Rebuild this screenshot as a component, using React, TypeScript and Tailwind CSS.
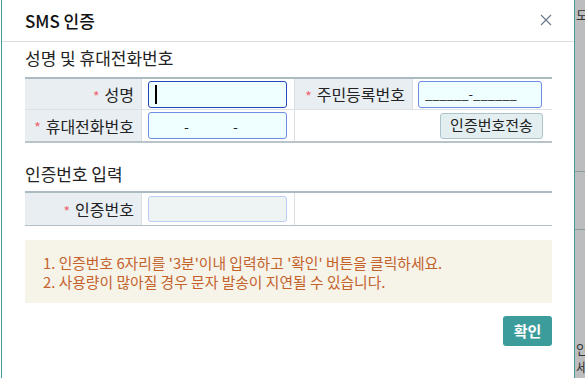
import React from "react";

const font = { fontFamily: '"Noto Sans CJK KR", "Noto Sans", sans-serif' };

function Star() {
  return <span className="text-[#f0646e] mr-[5px] text-[14px] relative top-[2px]">*</span>;
}

function Label({ children }: { children: React.ReactNode }) {
  return (
    <div className="bg-[#e8eef2] flex items-center justify-end pr-[7px] text-[16px] text-[#222] border-r border-[#dcdfe2]">
      <Star />
      {children}
    </div>
  );
}

export default function App() {
  return (
    <div className="w-[585px] h-[378px] bg-white flex overflow-hidden" style={font}>
      <div className="w-[574px] h-full flex pl-[1px]">
        <div className="flex-1 h-full border-l border-[#3f9c9c] flex flex-col">
          {/* header */}
          <div className="h-[42px] border-b border-[#dcdcdc] flex items-center justify-between pl-[23px] pr-[22px] shrink-0">
            <span className="text-[17px] text-[#111] font-medium">SMS 인증</span>
            <svg width="12" height="12" viewBox="0 0 12 12" className="mt-[-2px]">
              <path d="M1 1 L11 11 M11 1 L1 11" stroke="#6c7a8e" strokeWidth="1.2" />
            </svg>
          </div>
          <div className="pl-[23px] pr-[22px] flex flex-col">
            <div className="h-[35px] flex items-center pb-[4px] text-[17px] text-[#222]">성명 및 휴대전화번호</div>
            {/* table 1 */}
            <div className="border-t-2 border-b-2 border-t-[#abbbc2] border-b-[#b9c4ca]">
              <div className="grid grid-cols-[117px_153px_118px_1fr] h-[31px] border-b border-[#dde1e4]">
                <Label>성명</Label>
                <div className="flex items-center pl-[6px] border-r border-[#dcdfe2]">
                  <div className="w-[139px] h-[27px] rounded-[3px] border border-[#2846b8] bg-[#effefe] flex items-center pl-[6px]">
                    <span className="w-[2px] h-[19px] bg-black" />
                  </div>
                </div>
                <Label>주민등록번호</Label>
                <div className="flex items-center pl-[5px]">
                  <div className="w-[124px] h-[27px] rounded-[3px] border border-[#6f8de6] bg-[#effefe] flex items-center pl-[6px] text-[13px] text-[#222]">
                    ______-______
                  </div>
                </div>
              </div>
              <div className="grid grid-cols-[117px_153px_118px_1fr] h-[31px]">
                <Label>휴대전화번호</Label>
                <div className="flex items-center pl-[6px] border-r border-[#dcdfe2]">
                  <div className="w-[139px] h-[27px] rounded-[3px] border border-[#6f8de6] bg-[#effefe] flex items-center text-[14px] text-[#222] relative">
                    <span className="absolute left-[35px] top-[3px]">-</span>
                    <span className="absolute left-[84px] top-[3px]">-</span>
                  </div>
                </div>
                <div className="col-span-2 flex items-center justify-end pr-[9px]">
                  <button className="w-[103px] h-[26px] rounded-[3px] border border-[#aec4cc] bg-[#e3eef0] text-[15px] text-[#222]">
                    인증번호전송
                  </button>
                </div>
              </div>
            </div>
            <div className="h-[48px] flex items-center pt-[14px] text-[17px] text-[#222]">인증번호 입력</div>
            {/* table 2 */}
            <div className="border-t-2 border-b border-t-[#abbbc2] border-b-[#b3bfc5]">
              <div className="grid grid-cols-[117px_153px_1fr] h-[32px]">
                <Label>인증번호</Label>
                <div className="flex items-center pl-[6px] border-r border-[#dcdfe2]">
                  <div className="w-[139px] h-[26px] rounded-[3px] border border-[#bccbf2] bg-[#edf4f3]" />
                </div>
                <div />
              </div>
            </div>
            {/* notice */}
            <div className="mt-[14px] h-[63px] bg-[#f6f3e9] pl-[18px] flex flex-col justify-center text-[14.8px] leading-[19px] text-[#c4622c]">
              <div>1. 인증번호 6자리를 '3분'이내 입력하고 '확인' 버튼을 클릭하세요.</div>
              <div>2. 사용량이 많아질 경우 문자 발송이 지연될 수 있습니다.</div>
            </div>
            <div className="flex justify-end mt-[13px]">
              <button className="w-[49px] h-[30px] rounded-[3px] bg-[#3c9c9c] text-white text-[15px] font-bold">
                확인
              </button>
            </div>
          </div>
        </div>
      </div>
      {/* background strip */}
      <div className="w-[11px] h-full bg-[#bcbdbf] border-l border-[#3f9c9c] flex flex-col text-[13px] text-[#333] overflow-hidden whitespace-nowrap">
        <div className="h-[29px] flex items-center pl-[1px]">도(</div>
        <div className="h-[143px] border-b border-[#8c9aa0]" />
        <div className="h-[58px] border-b border-[#8c9aa0]" />
        <div className="flex-1" />
        <div className="pl-[1px] leading-[18px]">인</div>
        <div className="pl-[1px] leading-[18px] mb-[2px]">세,</div>
      </div>
    </div>
  );
}
